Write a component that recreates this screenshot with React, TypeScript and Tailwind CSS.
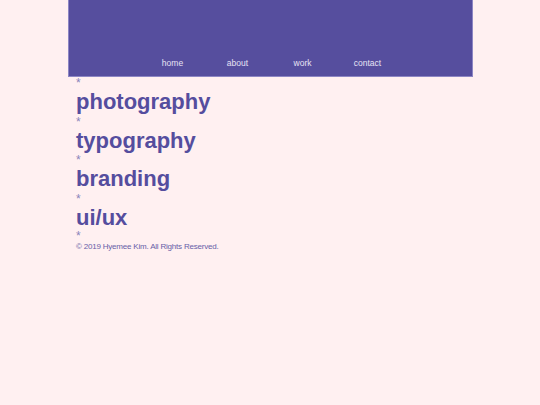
const nav = ['home', 'about', 'work', 'contact'];
const items = ['photography', 'typography', 'branding', 'ui/ux'];

export default function App() {
  return (
    <div className="min-h-[405px] bg-[#fff0f1] font-['Liberation_Sans',Arial,sans-serif]">
      <header className="mx-auto flex h-[77px] w-[405px] items-end justify-center border-x border-b border-[#8d86c4] bg-[#564e9e] pb-[8px]">
        {nav.map((n) => (
          <a key={n} className="w-[65px] text-center text-[8.5px] leading-[10px] text-[#e6e2f4]">
            {n}
          </a>
        ))}
      </header>
      <main className="mx-auto w-[405px] pl-[8.5px]">
        <div className="h-[12px] text-[12px] leading-[12px] text-[#8a84ba]">*</div>
        {items.map((it, i) => (
          <div key={it}>
            <h2 className="text-[22px] font-bold leading-[25.5px] text-[#554d9e]">{it}</h2>
            <div
              className={
                i === items.length - 1
                  ? 'h-[12px] pt-[1px] text-[12px] leading-[11px] text-[#8a84ba]'
                  : 'h-[13px] pt-[1px] text-[12px] leading-[12px] text-[#8a84ba]'
              }
            >
              *
            </div>
          </div>
        ))}
        <p className="text-[8px] leading-[10px] tracking-[-0.2px] text-[#6760a8]">© 2019 Hyemee Kim. All Rights Reserved.</p>
      </main>
    </div>
  );
}
